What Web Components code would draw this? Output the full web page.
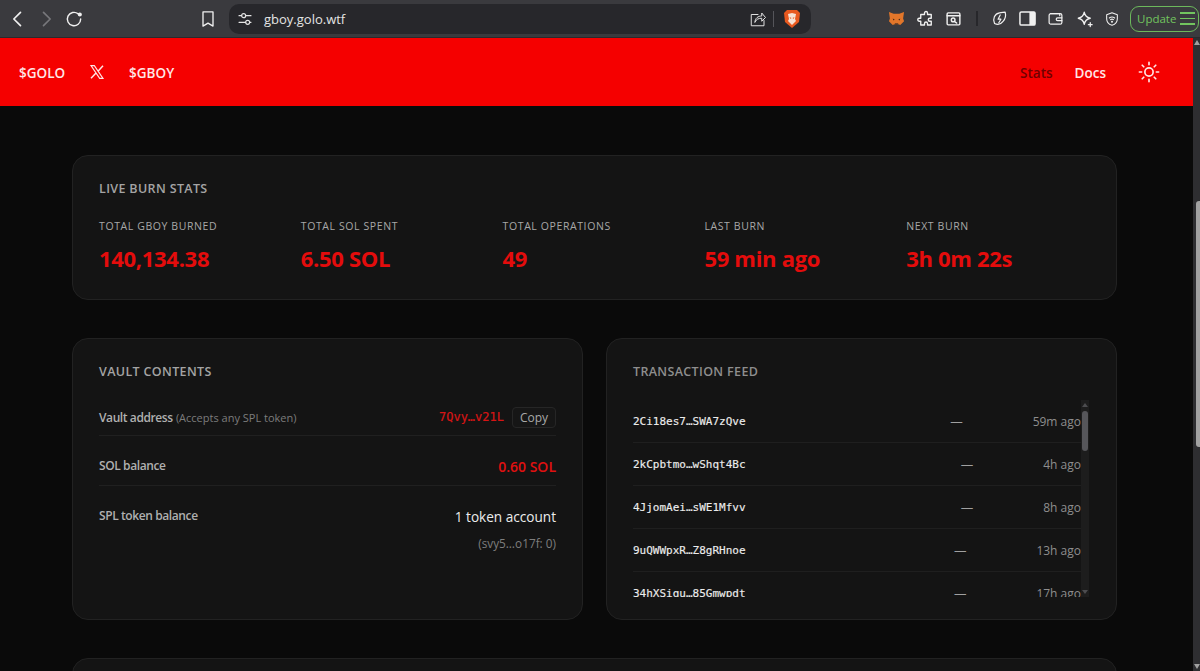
<!DOCTYPE html>
<html lang="en">
<head>
<meta charset="utf-8">
<title>gboy.golo.wtf</title>
<style>
  html, body { height: 100%; margin: 0; overflow: hidden; background: #0a0a0a; }
  body { display: flex; flex-direction: column; font-family: "Open Sans", "Noto Sans", sans-serif; }
</style>
</head>
<body>
<browser-bar url="gboy.golo.wtf"></browser-bar>
<page-frame>
  <site-header></site-header>
  <page-main>
    <stat-card title="Live Burn Stats">
      <burn-stat label="Total GBOY Burned" value="140,134.38"></burn-stat>
      <burn-stat label="Total SOL Spent" value="6.50 SOL"></burn-stat>
      <burn-stat label="Total Operations" value="49"></burn-stat>
      <burn-stat label="Last Burn" value="59 min ago"></burn-stat>
      <burn-stat label="Next Burn" value="3h 0m 22s"></burn-stat>
    </stat-card>
    <two-columns>
      <vault-card></vault-card>
      <feed-card>
        <feed-row sig="2Ci18es7…SWA7zQve" age="59m ago"></feed-row>
        <feed-row sig="2kCpbtmo…wShqt4Bc" age="4h ago"></feed-row>
        <feed-row sig="4JjomAei…sWE1Mfvv" age="8h ago"></feed-row>
        <feed-row sig="9uQWWpxR…Z8gRHnoe" age="13h ago"></feed-row>
        <feed-row sig="34hXSigu…85Gmwpdt" age="17h ago"></feed-row>
      </feed-card>
    </two-columns>
    <empty-card></empty-card>
  </page-main>
</page-frame>

<script>
// Small helper: attach an open shadow root and fill it from a string.
const shadow = (el, html) => {
  el.attachShadow({ mode: 'open' }).innerHTML = html
}

const cardStyle = `
  background: #141414;
  border: 1px solid #222;
  border-radius: 16px;
  box-sizing: border-box;
`

const titleStyle = `
  margin: 0;
  font-size: 12.5px;
  line-height: 13px;
  font-weight: 600;
  letter-spacing: 0.35px;
  text-transform: uppercase;
  color: #a4a4a4;
`

const icon = (body, w = 22, h = 22, sw = 1.7, extra = '') =>
  `<svg width="${w}" height="${h}" viewBox="0 0 24 24" fill="none" stroke="currentColor" stroke-width="${sw}" stroke-linecap="round" stroke-linejoin="round" ${extra}>${body}</svg>`

customElements.define('browser-bar',
  /**
   * The browser toolbar above the page.
   */
  class extends HTMLElement {
    constructor () {
      super()
      shadow(this, `
      <style>
        :host { display: flex; align-items: center; height: 38px; flex: none; background: #3a3a3e; color: #f0f0f0; border-bottom: 1px solid #2a2a2d; box-sizing: border-box; font-family: "Open Sans", sans-serif; }
        svg { flex: none; display: block; }
        .nav { display: flex; flex: none; align-items: center; width: 229px; padding-left: 8px; box-sizing: border-box; }
        .nav span { flex: none; }
        .dim { color: #77777b; }
        .pill { display: flex; flex: none; align-items: center; width: 582px; height: 30px; background: #27272b; border-radius: 10px; padding: 0 10px 0 8px; box-sizing: border-box; color: #e4e4e4; font-size: 13px; }
        .url { margin-left: 11px; flex: 1; }
        .sep { width: 1px; height: 16px; background: #55555a; margin: 0 9px 0 6px; }
        .tools { display: flex; flex: none; align-items: center; margin-left: 76px; }
        .update { display: flex; align-items: center; gap: 4px; margin-left: 10px; width: 69px; height: 26px; border: 1px solid #6cb85c; border-radius: 9px; box-sizing: border-box; padding-left: 6px; color: #72c45f; font-size: 11.5px; }
        .lines { display: flex; flex-direction: column; gap: 4px; }
        .lines i { display: block; width: 15px; height: 1.5px; background: #72c45f; }
        .bar { width: 2px; height: 15px; background: #27272b; margin: 0 13px 0 14px; }
      </style>
      <div class="nav">
        ${icon('<path d="M15 4l-8 8 8 8"/>', 20, 20, 2)}
        <span style="width:8px"></span>
        <span class="dim">${icon('<path d="M9 4l8 8-8 8"/>', 20, 20, 2)}</span>
        <span style="width:8px"></span>
        ${icon('<path d="M20 12a8 8 0 1 1-3-6.2"/><circle cx="19" cy="6.5" r="1.6" fill="currentColor"/>', 20, 20, 1.7)}
        <span style="width:114px"></span>
        ${icon('<path d="M6 3.5h12v17l-6-3.6-6 3.6z"/>', 20, 20, 1.6)}
      </div>
      <div class="pill">
        ${icon('<path d="M3 7h4M13 7h8M3 17h10M19 17h2"/><circle cx="10" cy="7" r="3"/><circle cx="16" cy="17" r="3"/>', 16, 16, 1.7)}
        <span class="url">${this.getAttribute('url')}</span>
        ${icon('<path d="M12 6H3v15h17v-7"/><path d="M8 16c0-5 4-8 9-8V4l5 6-5 5v-4c-4 0-7 1-9 5z"/>', 18, 18, 1.3)}
        <span class="sep"></span>
        <svg width="18" height="20" viewBox="0 0 18 20"><path d="M4 1h10l3 3-1 9-7 6-7-6-1-9z" fill="#e8591f"/><path d="M5 5l4-1 4 1-1 5 1 2-4 4-4-4 1-2z" fill="#f6e2d4"/><path d="M6.500 8l2 1-1 1zM11.500 8l-2 1 1 1z" fill="#e8591f"/></svg>
      </div>
      <div class="tools">
        <svg width="19" height="17" viewBox="0 0 20 18"><path d="M2 2l5 2h6l5-2-1 7 1 3-4 4-2-1H8l-2 1-4-4 1-3z" fill="#e2762a"/><path d="M6 9l2 1-1 1zM14 9l-2 1 1 1z" fill="#2a1c12"/><path d="M8 14h4l-1 2H9z" fill="#5a3a22"/></svg>
        <span style="width:11px"></span>
        ${icon('<path d="M10 4a2 2 0 0 1 4 0v2h5v5h-2a2 2 0 0 0 0 4h2v5h-5v-2a2 2 0 0 0-4 0v2H5v-5H3a2 2 0 0 1 0-4h2V6h5z"/>', 18, 18, 1.8)}
        <span style="width:10px"></span>
        ${icon('<rect x="3" y="4" width="18" height="17" rx="1.5"/><path d="M3 8h18"/><circle cx="11.5" cy="14" r="2.6"/><path d="M14 16.5l2.5 2"/>', 17, 17, 2)}
        <span class="bar"></span>
        ${icon('<path d="M5 19C2 13 5 5 12 4c3 0 6-1 8-1 1 4 0 10-3 13-3 4-8 5-12 3z"/><path d="M13 7l-3 6h4l-3 5"/>', 17, 17, 1.7)}
        <span style="width:11px"></span>
        <svg width="17" height="17" viewBox="0 0 18 18"><rect x="1" y="2" width="16" height="14" rx="1.5" fill="none" stroke="currentColor" stroke-width="1.6"/><rect x="11" y="2" width="6" height="14" fill="currentColor"/></svg>
        <span style="width:11px"></span>
        ${icon('<path d="M5 5h13v3"/><rect x="3" y="5" width="18" height="15" rx="2.5"/><path d="M21 11h-6a2 2 0 0 0 0 4h6"/>', 17, 17, 1.7)}
        <span style="width:12px"></span>
        ${icon('<path d="M11 3c1 5 3 7 8 8-5 1-7 3-8 8-1-5-3-7-8-8 5-1 7-3 8-8z"/><path d="M19 17v5M16.5 19.5h5"/>', 18, 18, 1.7)}
        <span style="width:10px"></span>
        ${icon('<path d="M12 2.5l8 3v6c0 5-3.5 8.500-8 10-4.500-1.500-8-5-8-10v-6z"/><path d="M8 10.500c2.500-2 5.500-2 8 0M9.800 13c1.400-1 3-1 4.400 0"/><circle cx="12" cy="16" r=".7" fill="currentColor"/>', 16, 16, 1.6)}
        <div class="update">Update<div class="lines"><i></i><i></i><i></i></div></div>
      </div>`)
    }
  }
)

customElements.define('page-frame',
  /**
   * The viewport below the toolbar, with its page scrollbar.
   */
  class extends HTMLElement {
    constructor () {
      super()
      shadow(this, `
      <style>
        :host { display: flex; flex: 1; min-height: 0; background: #0a0a0a; }
        .view { flex: 1; min-width: 0; overflow: hidden; }
        .track { width: 7px; flex: none; background: #2e2e31; position: relative; }
        .up, .down { position: absolute; left: 1px; width: 0; height: 0; border: 3px solid transparent; }
        .up { top: 2px; border-top: 0; border-bottom: 5px solid #a0a0a0; }
        .down { bottom: 2px; border-bottom: 0; border-top: 5px solid #a0a0a0; }
        .thumb { position: absolute; left: 3px; right: 0; top: 163px; height: 246px; background: #a2a2a2; border-radius: 3px 0 0 3px; }
      </style>
      <div class="view"><slot></slot></div>
      <div class="track"><div class="up"></div><div class="thumb"></div><div class="down"></div></div>`)
    }
  }
)

customElements.define('site-header',
  /**
   * The red site header.
   */
  class extends HTMLElement {
    constructor () {
      super()
      shadow(this, `
      <style>
        :host { display: flex; align-items: center; height: 68px; background: #f50000; padding: 0 33px 0 19px; font-size: 13.5px; font-weight: 600; color: #ffe6e6; }
        nav { display: flex; align-items: center; gap: 24px; }
        nav span { position: relative; top: 1px; }
        .right { margin-left: auto; gap: 22px; }
        .active { color: #700000; }
        svg { display: block; }
        .sun { margin-left: 10px; }
      </style>
      <nav>
        <span>$GOLO</span>
        <svg width="16" height="16" viewBox="0 0 24 24" fill="none" stroke="currentColor" stroke-width="1.7"><path d="M3 2.500h5l13 19h-5z"/><path d="M21 2.500L13.500 10.800M10.500 13.500L3 21.500" stroke-width="2.200"/></svg>
        <span>$GBOY</span>
      </nav>
      <nav class="right">
        <span class="active">Stats</span>
        <span>Docs</span>
        <svg class="sun" width="22" height="22" viewBox="0 0 24 24" fill="none" stroke="currentColor" stroke-width="1.800" stroke-linecap="round"><circle cx="12" cy="12" r="4.500"/><path d="M12 1.500v2.500M12 20v2.500M1.500 12H4M20 12h2.500M4.600 4.600l1.700 1.700M17.700 17.700l1.700 1.700M4.600 19.400l1.700-1.700M17.700 6.300l1.700-1.700"/></svg>
      </nav>`)
    }
  }
)

customElements.define('page-main',
  /**
   * The column of cards.
   */
  class extends HTMLElement {
    constructor () {
      super()
      shadow(this, `
      <style>
        :host { display: flex; flex-direction: column; gap: 38px; padding: 49px 76px 0 72px; }
      </style>
      <slot></slot>`)
    }
  }
)

customElements.define('stat-card',
  /**
   * The card with the burn statistics.
   */
  class extends HTMLElement {
    constructor () {
      super()
      shadow(this, `
      <style>
        :host { display: block; height: 145px; padding: 26px; ${cardStyle} }
        h2 { ${titleStyle} margin-bottom: 25px; }
        .grid { display: grid; grid-template-columns: repeat(5, 1fr); gap: 18px; }
      </style>
      <h2>${this.getAttribute('title')}</h2>
      <div class="grid"><slot></slot></div>`)
    }
  }
)

customElements.define('burn-stat',
  /**
   * One label and value in the stat card.
   */
  class extends HTMLElement {
    constructor () {
      super()
      shadow(this, `
      <style>
        :host { display: block; }
        .label { font-size: 10.5px; line-height: 12px; letter-spacing: 0.6px; text-transform: uppercase; color: #a8a8a8; font-weight: 500; }
        .value { margin-top: 11px; font-size: 22px; line-height: 30px; font-weight: 700; color: #e40c0c; letter-spacing: -0.3px; }
      </style>
      <div class="label">${this.getAttribute('label')}</div>
      <div class="value">${this.getAttribute('value')}</div>`)
    }
  }
)

customElements.define('two-columns',
  /**
   * The row with the vault and the feed.
   */
  class extends HTMLElement {
    constructor () {
      super()
      shadow(this, `
      <style>
        :host { display: grid; grid-template-columns: 1fr 1fr; gap: 23px; height: 282px; }
      </style>
      <slot></slot>`)
    }
  }
)

customElements.define('vault-card',
  /**
   * The vault contents card.
   */
  class extends HTMLElement {
    constructor () {
      super()
      shadow(this, `
      <style>
        :host { display: block; padding: 26px; ${cardStyle} font-size: 12px; color: #b0b0b0; }
        h2 { ${titleStyle} margin-bottom: 24px; }
        .row { display: flex; justify-content: space-between; border-bottom: 1px solid #202020; }
        .addr { align-items: center; height: 30px; padding-bottom: 3px; }
        .sol { height: 50px; padding-top: 21px; box-sizing: border-box; }
        .spl { border: 0; padding-top: 21px; }
        b { font-weight: 600; letter-spacing: -0.4px; }
        small { font-size: 11px; color: #7c7c7c; font-weight: 400; }
        .right { display: flex; align-items: center; gap: 8px; }
        code { font-family: "DejaVu Sans Mono", monospace; font-size: 12px; color: #d81414; -webkit-text-stroke: 0.2px #d81414; }
        button { font: inherit; font-size: 12px; color: #a8a8a8; width: 44px; height: 21px; padding: 0; background: #161616; border: 1px solid #262626; border-radius: 4px; }
        .red { font-size: 14px; font-weight: 600; color: #e01010; line-height: 18px; margin-top: 1px; }
        .end { text-align: right; }
        .count { font-size: 13.6px; color: #ececec; line-height: 18px; margin-top: 1px; }
        .sub { font-size: 11.8px; color: #7e7e7e; margin-top: 9px; line-height: 16px; }
      </style>
      <h2>Vault Contents</h2>
      <div class="row addr">
        <span><b>Vault address</b> <small>(Accepts any SPL token)</small></span>
        <span class="right"><code>7Qvy…v21L</code><button>Copy</button></span>
      </div>
      <div class="row sol">
        <b>SOL balance</b>
        <span class="red">0.60 SOL</span>
      </div>
      <div class="row spl">
        <b>SPL token balance</b>
        <div class="end">
          <div class="count">1 token account</div>
          <div class="sub">(svy5…o17f: 0)</div>
        </div>
      </div>`)
    }
  }
)

customElements.define('feed-card',
  /**
   * The transaction feed card, with a scrolled list clipped at its bottom.
   */
  class extends HTMLElement {
    constructor () {
      super()
      shadow(this, `
      <style>
        :host { display: block; padding: 26px 27px 0 26px; ${cardStyle} }
        h2 { ${titleStyle} margin-bottom: 22px; color: #8e8e8e; }
        .wrap { position: relative; height: 197px; overflow: hidden; padding-right: 8px; }
        .scroll { position: absolute; top: 0; right: 0; bottom: 0; width: 8px; background: #1d1d1d; }
        .scroll .thumb { position: absolute; left: 1px; right: 1px; top: 11px; height: 40px; background: #56565a; border-radius: 3px; }
        .scroll .a { position: absolute; left: 1px; top: 3px; border: 3px solid transparent; border-top: 0; border-bottom: 4px solid #4c4c4f; }
        .scroll .b { position: absolute; left: 1px; bottom: 3px; border: 3px solid transparent; border-bottom: 0; border-top: 4px solid #4c4c4f; }
      </style>
      <h2>Transaction Feed</h2>
      <div class="wrap">
        <slot></slot>
        <div class="scroll"><div class="a"></div><div class="thumb"></div><div class="b"></div></div>
      </div>`)
    }
  }
)

customElements.define('feed-row',
  /**
   * One transaction in the feed.
   */
  class extends HTMLElement {
    constructor () {
      super()
      shadow(this, `
      <style>
        :host { display: flex; align-items: center; gap: 70px; height: 43px; box-sizing: border-box; border-bottom: 1px solid #1f1f1f; font-size: 12px; color: #8e8e8e; }
        code { flex: 1; font-family: "DejaVu Sans Mono", monospace; font-size: 11px; color: #ececec; -webkit-text-stroke: 0.15px #ececec; }
        .dash { color: #a0a0a0; font-size: 12.5px; }
      </style>
      <code>${this.getAttribute('sig')}</code>
      <span class="dash">—</span>
      <span>${this.getAttribute('age')}</span>`)
    }
  }
)

customElements.define('empty-card',
  /**
   * The top of the next card, cut off by the window.
   */
  class extends HTMLElement {
    constructor () {
      super()
      shadow(this, `
      <style>
        :host { display: block; height: 200px; ${cardStyle} }
      </style>`)
    }
  }
)
</script>
</body>
</html>
